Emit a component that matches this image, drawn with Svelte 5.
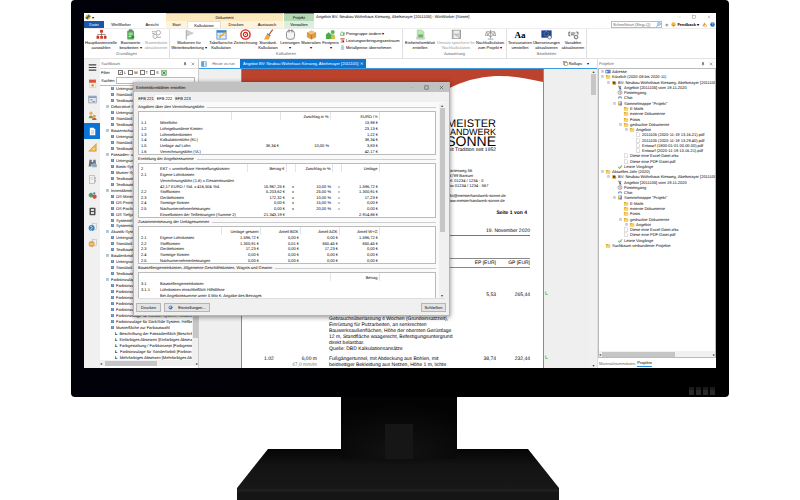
<script>
  const icons = {
    org: '<path d="M6 4v2M2 8V6h8v2M6 6v2" stroke="#555" fill="none" stroke-width=".7"/><rect x="4.4" y="1" width="3.2" height="3" fill="#d03a2b"/><path d="M.6 7.6h2.9v3H.6zM4.6 7.6h2.9v3H4.6zM8.6 7.6h2.9v3H8.6z" fill="#c9382a"/>',
    clipboard: '<rect x="2.4" y="1.6" width="7.4" height="9.8" rx="1" fill="#4fae54"/><rect x="4.2" y=".4" width="3.8" height="2.2" fill="#777"/><path d="M4 4.6h4.4M4 6.4h4.4M4 8.2h3" stroke="#e8ffe8" stroke-width=".8"/><circle cx="8.6" cy="8.8" r="1.6" fill="#2c8c3a"/>',
    refresh: '<g fill="none" stroke="#aaa"><path d="M1 3h5M1 5h3M6 9h5"/><circle cx="8" cy="4" r="2.4"/><circle cx="4.4" cy="8" r="2.2"/></g>',
    flag: '<path d="M2.5 1v10.5" stroke="#999"/><path d="M3 1.5l7 3-7 3z" fill="#d4d4d4" stroke="#aaa" stroke-width=".6"/>',
    table: '<rect x="1" y="1.5" width="10" height="9.5" fill="#e4f1fb" stroke="#3a7fc0" stroke-width=".8"/><path d="M1 2h10v2H1z" fill="#3a86cc"/><path d="M1 7h10M4.5 4v7" stroke="#86b2da" stroke-width=".6"/><path d="M3.5 9.5l6.6-6" stroke="#eda022" stroke-width="1.4"/>',
    target: '<circle cx="6" cy="6" r="5" fill="#fff" stroke="#d02a20" stroke-width="1.5"/><circle cx="6" cy="6" r="2.3" fill="#fff" stroke="#d02a20" stroke-width="1.3"/><circle cx="6" cy="6" r=".6" fill="#d02a20"/>',
    brush: '<path d="M10.6.6L6.6 6" stroke="#bb4b2a" stroke-width="1.3"/><path d="M4.6 5l3.4 2.4-1.6 4H1z" fill="#f5aa35"/><path d="M4.6 5l3.4 2.4" stroke="#4a7eb2" stroke-width="1.2"/>',
    mouse: '<rect x="1.6" y="1.8" width="8.8" height="9.4" rx="3" fill="#f5f5f5" stroke="#777" stroke-width=".9"/><path d="M4.4 .4v3.4M7.6 .4v3.4" stroke="#666" stroke-width=".9"/>',
    box: '<path d="M1 4l5-2.4L11 4v5l-5 2.4L1 9z" fill="#e29a44"/><path d="M1 4l5 2.2L11 4M6 6.2v5" stroke="#a8642a" fill="none" stroke-width=".7"/><path d="M6 1.6L11 4 6 6.2 1 4z" fill="#f2c07c"/>',
    price: '<path d="M1 11V6l3-2.4L7 6v5z" fill="#4ea84c"/><circle cx="8.4" cy="3.4" r="2.2" fill="#61b755"/><path d="M6.5 6h4v5h-4z" fill="#8cc876"/><circle cx="9.4" cy="9.4" r="1.9" fill="#f1b933"/>',
    house: '<path d="M1.5 11V5L5 1.5 8.5 5v6z" fill="#e5f5e4" stroke="#369c3c" stroke-width="1.3"/><path d="M8 3h3v8H8" fill="#58b35a"/>',
    period: '<path d="M1 1h10v2.2H1z" fill="#c13226"/><path d="M3 5h7M3 7.4h5M1 10h9" stroke="#d55b32" stroke-width="1.6"/><circle cx="8" cy="8" r="2" fill="#333"/>',
    metal: '<path d="M4 .8h4v3H4zM3 5h6v2.4H3zM2.6 8.6h7V11h-7z" fill="#cfe0ee" stroke="#7a94ae" stroke-width=".7"/>',
    sheet: '<path d="M2.4 1h5l2.4 2.4V11H2.4z" fill="#bfe4b7" stroke="#8dbb86" stroke-width=".5"/><path d="M3.6 6h5v3.4h-5z" fill="#65b561"/><path d="M1 9.4h10v1.8H1z" fill="#cecece"/>',
    save: '<rect x="1.4" y="1.4" width="9" height="9" fill="#c6c6c6" stroke="#999"/><path d="M3 2h6v3H3zM3 7h6v3H3z" fill="#eee"/><path d="M5 6l6 5" stroke="#aaa"/>',
    scale: '<g fill="none" stroke="#8a8a8a" stroke-width=".8"><path d="M6 1v9.5M3 11h6M1.6 3h8.8M1.6 3L.4 7h3zM10.4 3L9 7h3z"/><circle cx="6" cy="6" r="2.2"/></g>',
    euflag: '<rect x=".4" y="1.5" width="11.2" height="8" fill="#1e479a"/><circle cx="5.8" cy="5.3" r="2.4" fill="none" stroke="#f5d442" stroke-width=".8" stroke-dasharray=".7 1"/><circle cx="9.4" cy="9" r="2" fill="#eee" stroke="#555" stroke-width=".7"/>',
    vars: '<path d="M2.4 3.4H1v4h1.4M9 3.4h1.8v2.8M3 4.4h5M3 6.4h4" fill="none" stroke="#555" stroke-width="1"/><circle cx="8.8" cy="8.8" r="2" fill="#eee" stroke="#555" stroke-width=".9"/>',
    menu: '<path d="M1 2.5h10M1 6h10M1 9.5h10" stroke="#444" stroke-width="1.5"/>',
    calendar: '<rect x="1.5" y="1" width="9" height="10" fill="#f7f1e9" stroke="#bbb" stroke-width=".5"/><path d="M1.5 1h9v4h-9z" fill="#dd5037"/><path d="M4.6 7h3v3h-3z" fill="#d98734"/>',
    plan: '<rect x="1" y="1.5" width="10" height="9" fill="#dde9f3" stroke="#89a"/><path d="M1 2h10v1.8H1z" fill="#7095b8"/><path d="M3 6.4h3M6 8.6h3" stroke="#d05f2c" stroke-width="1.2"/>',
    people: '<circle cx="4" cy="3" r="2.2" fill="#e9b064"/><path d="M1 9.5C1 5 7 5 7 9.5z" fill="#6ba53e"/><circle cx="8.4" cy="7" r="1.9" fill="#dfa255"/><path d="M5.4 12c0-4 6-4 6 0z" fill="#c15f3b"/>',
    page: '<path d="M2.4 1h5l2.3 2.3V11H2.4z" fill="#fff"/><path d="M4 5h4M4 7h4M4 9h4" stroke="#72a6d6" stroke-width=".7"/>',
    ruler: '<path d="M11 .8V11H.8z" fill="#f0b34c" stroke="#c18328" stroke-width=".6"/><path d="M8.6 6v3H5.8z" fill="#fff4dc"/>',
    binoc: '<path d="M2 1h3v3h2V1h3l1.2 9H7.4V7H4.6v3H.8z" fill="#67737f"/><path d="M5.5 7l3-2 3 2v4h-6z" fill="#8baac3"/>',
    book: '<rect x="2" y="1" width="7" height="10" fill="#f3f3f3" stroke="#9a9a9a" stroke-width=".7"/><path d="M9.8 3v2.4M9.8 6.5v3" stroke="#69a2d2"/><path d="M3.4 3.5h4M3.4 5.5h4" stroke="#bcbcbc" stroke-width=".7"/>',
    cubes: '<path d="M1 4l3-2 3 2v3L4 9 1 7z" fill="#4fa05c"/><path d="M6 6l2.8-1.6L11.4 6v3l-2.6 1.8L6 9z" fill="#d2503b"/><circle cx="8.4" cy="3" r="1.5" fill="#4d81b9"/>',
    film: '<rect x="2" y="1" width="8" height="10" rx="1" fill="#4e4e4e"/><path d="M4 2.6h4v2.6H4zM4 6.8h4v2.6H4z" fill="#e0e0e0"/>',
    globe: '<rect x="6" y="1" width="5" height="8" fill="#eee" stroke="#aaa" stroke-width=".6"/><circle cx="4.8" cy="6.8" r="4" fill="#3d83bf"/><path d="M3 4.4c3 0 3 2 1.6 3.2S3 9.4 5 10" stroke="#cfe8f7" fill="none"/>',
    parcel: '<rect x="6" y="1" width="5" height="8" fill="#eee" stroke="#aaa" stroke-width=".6"/><circle cx="4.8" cy="6.8" r="4" fill="#e9a145"/><path d="M2.6 6.8h4.6" stroke="#fbe4bf" stroke-width="1.2"/>',
    folder: '<path d="M1 2.4h4l1 1.4h5V11H1z" fill="#e0a92f"/><path d="M2.4 5.4H12L10.6 11H1z" fill="#fbd568"/>',
    card: '<rect y="2" width="12" height="8.4" fill="#3c6aa5"/><path d="M1.4 4h3.6v4.4H1.4z" fill="#fff"/><path d="M6.4 4.6h4M6.4 7h4" stroke="#d6e4f4"/>',
    site: '<path d="M1 2.4h4l1 1.4h5V11H1z" fill="#f2bf41"/><path d="M4 4h5v6H4z" fill="#2f2f2f"/><circle cx="9" cy="9" r="2.4" fill="#de8b24"/>',
    offer: '<path d="M2 1l8 3.4-3.4 1.4L10 11H5z" fill="#2d5f9c"/><circle cx="4" cy="4" r="2" fill="#e2a64a"/>',
    mail: '<circle cx="6" cy="6" r="5" fill="#e7e7ef" stroke="#6d5a6d"/><path d="M6 3v3.4l2.4 1.4" stroke="#c04432" fill="none" stroke-width="1.3"/>',
    chat: '<path d="M1 8.6C1 1 11 1 11 8.6z" fill="#4b8bcc"/><path d="M3.4 6h5.2v4.6H3.4z" fill="#eef5fd"/>',
    binder: '<path d="M1.6 1h5v10h-5z" fill="#e69c37"/><path d="M6 1h4.8v10H6z" fill="#6a90bd"/><path d="M3 3h5v2.6H3z" fill="#fff"/>',
    file: '<path d="M2.4 1h5l2.4 2.4V11H2.4z" fill="#fff" stroke="#a0a0a0" stroke-width=".9"/>',
    recent: '<path d="M1 5h10v6H1z" fill="#dcefd9"/><path d="M2 8l3 2.6L10.6 3" fill="none" stroke="#3e9a44" stroke-width="2"/>',
    pin: '<path d="M4 1h4v5H4zM2.6 6h6.8v1.2H2.6zM5.5 7h1v4h-1z" fill="#444"/>',
    close: '<path d="M2 2l8 8M10 2l-8 8" stroke="#444" stroke-width="1.3"/>',
    min: '<path d="M1 6h10" stroke="#777"/>',
    max: '<rect x="2" y="2" width="8" height="8" fill="none" stroke="#555" stroke-width="1.5"/>',
    search: '<circle cx="7.4" cy="4.6" r="3.4" fill="#cde6f8" stroke="#3c8bcc" stroke-width="1.4"/><path d="M5 7.2L1 11" stroke="#3c8bcc" stroke-width="1.8"/>',
    excel: '<rect x="1" y="1" width="10" height="10" fill="#b9e0b4" stroke="#4f9a50"/><path d="M3 3l6 6M9 3L3 9" stroke="#2f7f36" stroke-width="1.6"/>',
    app: '<circle cx="6" cy="6" r="5" fill="#f2b53b"/><path d="M1 6a5 5 0 005 5V6z" fill="#2f6fb4"/><path d="M6 1a5 5 0 015 5H6z" fill="#4c8f3d"/><circle cx="6" cy="6" r="1.6" fill="#333"/>',
    smile: '<circle cx="6" cy="6" r="5.2" fill="#f7b52c"/><path d="M3 7c1.6 2.6 4.4 2.6 6 0" stroke="#845400" fill="none"/>',
    alert: '<path d="M6 .8L11.6 10H.4z" fill="#f5a623"/><circle cx="8.4" cy="8.4" r="2.4" fill="#fff" stroke="#d98613"/>',
    help: '<circle cx="6" cy="6" r="5.4" fill="#1d5fae"/><path d="M4 4.6c0-2.6 4-2.6 4 0 0 1.6-2 1.4-2 3M6 8.6v1.2" stroke="#fff" fill="none" stroke-width="1.3"/>',
    side: '<rect x="1" y="1.5" width="10" height="9" fill="#fff" stroke="#3981bd"/><path d="M1 1.5h5v9H1z" fill="#5aa0d8"/><path d="M7.5 4h2.5M7.5 6h2.5M7.5 8h2.5" stroke="#567"/>',
    roll: '<rect x="1" y="1" width="7" height="7" fill="#eee" stroke="#555"/><rect x="4" y="4" width="7" height="7" fill="#fff" stroke="#555"/>',
    gear: '<circle cx="6" cy="6" r="4.8" fill="#4d86c4"/><circle cx="5" cy="5" r="2" fill="#cfe2f6"/><path d="M6 9.5L10.5 5" stroke="#234f86" stroke-width="1.3"/>'
  };

  const groups = [
    { label: 'Grundlagen', w: 86, items: [
      ['org', 34, 'Hauptkostenstelle', 'auswählen'],
      ['clipboard', 25, 'Basiswerte', 'bearbeiten ▾'],
      ['refresh', 26, 'Stammdaten', 'aktualisieren', true]] },
    { label: 'Kalkulieren', w: 233, items: [
      ['flag', 38, 'Markieren für', 'Weiterbearbeitung ▾'],
      ['table', 26, 'Tabellarische', 'Kalkulation'],
      ['target', 23, 'Zeitrechnung', ''],
      ['brush', 22, 'Standard-', 'Kalkulation'],
      ['mouse', 22, 'Leistungen', '▾'],
      ['box', 20, 'Materialien', '▾'],
      ['price', 19, 'Festpreis', '▾']],
      list: [['house', 'Preisgruppe ändern ▾'], ['period', 'Leistungserbringungszeitraum'], ['metal', 'Metallpreise übernehmen']] },
    { label: 'Auswertung', w: 104, items: [
      ['sheet', 34, 'Einheitsformblatt', 'erstellen'],
      ['save', 38, 'Umsatz speichern für', 'Nachkalkulation', true],
      ['scale', 30, 'Nachkalkulation', 'zum Projekt ▾']] },
    { label: 'Bearbeiten', w: 80, items: [
      ['Aa', 26, 'Textvarianten', 'umstellen'],
      ['euflag', 27, 'Übersetzungen', 'aktualisieren'],
      ['vars', 26, 'Variablen', 'aktualisieren']] }
  ];

  const nav = ['menu', 'calendar', 'plan', 'people', 'page', 'ruler', 'binoc', 'book', 'cubes', 'film', 'globe', 'parcel'];

  const basics = ['Untergrund', 'Standard', 'Textbaustein'];
  const tree = [
    ...basics.map((t) => [1, t]),
    [0, 'Dekorative S'], ...basics.map((t) => [1, t]),
    [0, 'Bautenschutz'], ...basics.map((t) => [1, t]),
    [0, 'Fassaden- u'], [1, 'Untergrund'], [1, 'Basis-Syst'], [1, 'Muster-Syst'], [1, 'Textbaustein'], [1, 'Textbaustein'],
    [0, 'Innendämm'], [1, 'OS-Mineral'], [1, 'OS-Protect'], [1, 'OS-Fachu'], [1, 'OS Tiefgar'], [1, 'Systemel'], [1, 'Systemtür'],
    [0, 'Akustik-Syst'], ...basics.map((t) => [1, t]),
    [0, 'Baudenkmal'], ...basics.map((t) => [1, t]),
    [0, 'Farbtonzulage'],
    ...Array(5).fill([1, 'Farbtonzulage']),
    [1, 'Farbtonzulage für Carbon System, Hellbezu'],
    [1, 'Farbtonzulage für DarkSide System, Hellbez'],
    [1, 'Musterfläche zur Farbauswahl'],
    [2, 'Beschriftung der Fassadenfläch [Beschrif'],
    [2, 'Einfarbiges Absetzen [Einfarbiges Absetz'],
    [2, 'Farbgestaltung / Farbkonzept [Farbgesta'],
    [2, 'Farbtonzulage für Sonderfarbtö [Farbton'],
    [2, 'Mehrfarbiges Absetzen [Mehrfarbiges Ab']
  ];

  const bv = 'BV: Neubau Wohnhaus Kiesweg, Abelsmayer [2011105] vor';
  const head = [
    [1, 'site', bv, '−'], [2, 'offer', 'Angebot [2011105] vom 19.11.2020'], [2, 'mail', 'Posteingang'], [2, 'chat', 'Chat'],
    [2, 'binder', 'Sammelmappe "Projekt"', '−'], [3, 'folder', 'E-Mails'], [3, 'folder', 'externe Dokumente'], [3, 'folder', 'Fotos'],
    [3, 'folder', 'gedruckte Dokumente', '−']
  ];
  const tail = [[3, 'file', 'Diese eine Excel-Datei.xlsx'], [3, 'file', 'Diese eine PDF-Datei.pdf'], [2, 'recent', 'Letzte Vorgänge']];
  const projects = [
    [0, 'card', 'Adresse', '+'],
    [0, 'folder', 'Kürzlich (2020-08 bis 2020-11)', '−'], ...head,
    [4, 'folder', 'Angebot', '−'],
    [5, 'file', '2011105 (2020-11-19 13.16.21).pdf'], [5, 'file', '2011105 (2020-11-19 13.29.40).pdf'],
    [5, 'file', 'Entwurf (1800-01-01 00.00.00).pdf'], [5, 'file', 'Entwurf (2020-11-19 13.16.21).pdf'],
    ...tail,
    [0, 'folder', 'Aktuelles Jahr (2020)', '−'], ...head, [4, 'folder', 'Angebot', '+'], ...tail,
    [0, 'folder', 'Suchbaum verbundener Projekte']
  ];

  const sections = [
    { title: 'Angaben über den Verrechnungslohn', h: 44, cols: [19, 73, 49, 50, 49],
      head: ['', '', '', 'Zuschlag in %', 'EURO / h'],
      rows: [
        ['1.1', 'Mittellohn', '', '', '13,98 €'], ['1.2', 'Lohngebundene Kosten', '', '', '23,13 €'],
        ['1.3', 'Lohnnebenkosten', '', '', '1,22 €'], ['1.4', 'Kalkulationslohn (KL)', '', '', '38,34 €'],
        ['1.5', 'Umlage auf Lohn', '38,34 €', '10,00 %', '3,83 €'], ['1.6', 'Verrechnungslohn (VL)', '', '', '42,17 €']] },
    { title: 'Ermittlung der Angebotssumme', h: 55, cols: [19, 89, 39, 9, 37, 9, 38],
      head: ['2', 'EKT = unmittelbare Herstellungskosten', 'Betrag €', '', 'Zuschlag in %', '', 'Umlage'],
      rows: [
        ['2.1', 'Eigene Lohnkosten'], ['', 'Verrechnungslohn (1.6) x Gesamtstunden'],
        ['', '42,17 EURO / Std. x 416,504 Std.', '15.967,25 €', 'x', '10,00 %', '=', '1.596,72 €'],
        ['2.2', 'Stoffkosten', '5.203,62 €', 'x', '25,00 %', '=', '1.300,91 €'],
        ['2.3', 'Gerätekosten', '172,32 €', 'x', '10,00 %', '=', '17,23 €'],
        ['2.4', 'Sonstige Kosten', '0,00 €', 'x', '15,00 %', '=', '0,00 €'],
        ['2.5', 'Nachunternehmerleistungen', '0,00 €', 'x', '20,00 %', '=', '0,00 €'],
        ['', 'Einzelkosten der Teilleistungen (Summe 2)', '21.343,19 €', '', '', '', '2.914,86 €']] },
    { title: 'Zusammensetzung der Umlagesummen', h: 38, cols: [19, 63, 39, 40, 39, 40],
      head: ['', '', 'Umlage gesamt', 'Anteil BGK', 'Anteil AGK', 'Anteil W+G'],
      rows: [
        ['2.1', 'Eigene Lohnkosten', '1.596,72 €', '0,00 €', '0,00 €', '1.596,72 €'],
        ['2.2', 'Stoffkosten', '1.300,91 €', '0,01 €', '650,45 €', '650,45 €'],
        ['2.3', 'Gerätekosten', '17,23 €', '0,00 €', '17,23 €', '0,00 €'],
        ['2.4', 'Sonstige Kosten', '0,00 €', '0,00 €', '0,00 €', '0,00 €'],
        ['2.5', 'Nachunternehmerleistungen', '0,00 €', '0,00 €', '0,00 €', '0,00 €']] },
    { title: 'Baustellengemeinkosten, Allgemeine Geschäftskosten, Wagnis und Gewinn', h: 26, cols: [19, 172, 49],
      head: ['', '', 'Betrag'],
      rows: [['3.1', 'Baustellengemeinkosten'], ['3.1.1', 'Lohnkosten einschließlich Hilfslöhne'], ['', 'Bei Angebotssumme unter 5 Mio €: Angabe des Betrages']] }
  ];
</script>

{#snippet icon(name)}
  <svg class="ico" viewBox="0 0 12 12" aria-hidden="true">{@html icons[name]}</svg>
{/snippet}

<div class="stage">
  <div class="monitor">
    <div class="screen">
      <header class="top">
        <div class="tabs-left">
          <div class="quick">{@render icon('app')}<span>▾</span></div>
          <div class="tabs"><button class="datei">Datei</button><button class="w34">WinWorker</button><button class="w28">Ansicht</button></div>
        </div>
        <div class="context doku">
          <div class="cap">Dokument</div>
          <div class="tabs"><button class="w21">Start</button><button class="active">Kalkulation</button><button class="w30">Drucken</button><button class="w32">Austausch</button></div>
        </div>
        <div class="context proj">
          <div class="cap">Projekt</div>
          <div class="tabs"><button class="grow">Verwalten</button></div>
        </div>
        <div class="titlebar">
          <div class="title-row">
            <span>Angebot BV: Neubau Wohnhaus Kiesweg, Abelsmayer [2011105] - WinWorker [Sonne]</span>
            <span class="winctl">
              <button aria-label="Minimieren">{@render icon('min')}</button>
              <button aria-label="Maximieren">{@render icon('max')}</button>
              <button aria-label="Schließen">{@render icon('close')}</button>
            </span>
          </div>
          <div class="tool-row">
            <label class="search"><input aria-label="Schnellstart" placeholder="Schnellstart (Strg+Q)" />{@render icon('search')}</label>
            <span class="eye">◉</span>
            <button class="feedback">{@render icon('smile')}<b>Feedback ▾</b></button>
            <button aria-label="Hinweise">{@render icon('alert')}</button>
            <button aria-label="Hilfe">{@render icon('help')}</button>
          </div>
        </div>
      </header>

      <div class="ribbon">
        {#each groups as g}
          <section class="group" style:width="{g.w}px">
            <div class="cmds">
              {#each g.items as [name, w, a, b, off]}
                <button class="cmd" class:off style:width="{w}px">
                  {#if name === 'Aa'}<span class="aa">Aa</span>{:else}{@render icon(name)}{/if}
                  <span>{a}</span><span>{b}</span>
                </button>
              {/each}
              {#if g.list}
                <div class="cmdlist">
                  {#each g.list as [name, t]}<button>{@render icon(name)}{t}</button>{/each}
                </div>
              {/if}
            </div>
            <div class="glabel">{g.label}</div>
          </section>
        {/each}
      </div>

      <div class="work">
        <nav class="rail">
          {#each nav as n}
            <button class:on={n === 'page'} aria-label={n}>{@render icon(n)}</button>
          {/each}
        </nav>

        <aside class="finder">
          <div class="phead"><span>Suchbaum</span>{@render icon('pin')}{@render icon('close')}</div>
          <div class="filter">
            <span class="flabel">Filter</span>
            <label><input type="checkbox" checked />L</label>
            <label><input type="checkbox" />M</label>
            <label><input type="checkbox" />T</label>
            <label><input type="checkbox" />S</label>
            {@render icon('excel')}
          </div>
          <label class="suchen"><span class="flabel">Suchen</span><input /></label>
          <div class="treebox">
            <ul class="tree">
              {#each tree as [lvl, t]}
                <li class="l{lvl}">{#if lvl === 2}<b>L</b>{:else}<i>{lvl ? '+' : '−'}</i>{/if}<span>{t}</span></li>
              {/each}
            </ul>
            <div class="vbar tree-v"><i></i></div>
          </div>
          <div class="hbar"><span>◂</span><i></i><span>▸</span></div>
        </aside>

        <main class="center">
          <div class="doctabs">
            {@render icon('side')}
            <button class="dt">Heute zu tun</button>
            <button class="dt cur">Angebot BV: Neubau Wohnhaus Kiesweg, Abelsmayer [2011105] <span>✕</span></button>
            <button class="rollups">{@render icon('roll')}Rollups</button><span class="arr">▾</span>
          </div>
          <div class="canvas">
            <article class="paper">
              <svg class="swoosh" viewBox="0 0 302 20" preserveAspectRatio="none" aria-hidden="true"><path d="M0 0H302V13Q272 6 254 7Q230 8 206 20H0z" fill="#bb422c"/></svg>
              <div class="brand">
                <div class="b1">MEISTER</div><div class="b2">HANDWERK</div><div class="b3">SONNE</div>
                <div class="b4">mit Tradition seit 1952</div>
              </div>
              <address>Marienweg 56<br />26789 Bantum<br />Tel. 01234 / 1234 - 0<br />Fax 01234 / 1234 - 567<br /><br />info@meisterhandwerk-sonne.de<br />www.meisterhandwerk-sonne.de</address>
              <div class="pageno">Seite 1 von 4</div>
              <div class="date">19. November 2020</div>
              <table class="items">
                <thead><tr><th class="pos">Pos.</th><th class="qty">Menge</th><th class="desc">Bezeichnung</th><th class="ep">EP [EUR]</th><th class="gp">GP [EUR]</th></tr></thead>
                <tbody>
                  <tr><td>1.01</td><td class="num">48,00 m²<br /><br /><br />0,00 h</td>
                    <td class="desc">Arbeits- und Schutzgerüst als Fassadengerüst<br />aus vorgefertigten Bauteilen, Lastklasse 3, W06<br />einschließlich Auf- und Abbau, Vorhaltung<br />DIN 4420-1, Flächengerüst als Stahlrohrgerüst,<br />Gebrauchsüberlassung 4 Wochen (Grundeinsatzzeit),<br />Einrüstung für Putzarbeiten, an senkrechten<br />Bauwerksaußenflächen, Höhe der obersten Gerüstlage<br />12 m, Standfläche waagerecht, Befestigungsuntergrund<br />direkt belastbar.<br />Quelle: DBD Kalkulationsansätze</td>
                    <td class="num">5,53</td><td class="num">265,44</td></tr>
                  <tr><td>1.02</td><td class="num">6,00 m<br /><small>47,0 mm/m</small></td>
                    <td class="desc">Fußgängertunnel, mit Abdeckung aus Bohlen, mit<br />beidseitiger Bekleidung aus Netzen, Höhe 1 m, lichte</td>
                    <td class="num">38,74</td><td class="num">232,44</td></tr>
                </tbody>
              </table>
            </article>
            <div class="marks"><span>L</span><span>L</span></div>
            <div class="vbar doc-v"><span>▴</span><i></i><span class="end">▾</span></div>
          </div>
        </main>

        <aside class="projects">
          <div class="phead"><span>Projekte</span>{@render icon('pin')}{@render icon('close')}</div>
          <div class="pbox">
            <ul class="ptree">
              {#each projects as [lvl, ic, t, ex]}
                <li style:padding-left="{2 + lvl * 6}px"><i class:show={ex}>{ex ?? ''}</i>{@render icon(ic)}<span>{t}</span></li>
              {/each}
            </ul>
            <div class="hbar wide"><span>◂</span><i></i><span>▸</span></div>
          </div>
          <div class="ptabs"><button>Materialstammdaten</button><button class="cur">Projekte</button></div>
        </aside>
      </div>

      <div class="dialog" role="dialog" aria-label="Einheitsformblätter erstellen">
        <div class="dtitle"><span>Einheitsformblätter erstellen</span>
          <button aria-label="Minimieren" class="dim">{@render icon('min')}</button>
          <button aria-label="Maximieren">{@render icon('max')}</button>
          <button aria-label="Schließen">{@render icon('close')}</button>
        </div>
        <div class="efb"><button>EFB 221</button><button class="cur">EFB 222</button><button>EFB 223</button></div>
        <div class="pane">
          <div class="forms">
            {#each sections as s, n}
              <h4>{s.title}</h4>
              <div class="tbox" class:open={n === 3} style:height="{s.h}px">
                <table>
                  <colgroup>{#each s.cols as c}<col style:width="{c}px" />{/each}<col /></colgroup>
                  <thead><tr>{#each s.head as h, i}<th class:txt={i < 2}>{h}</th>{/each}<th class="rest"></th></tr></thead>
                  <tbody>
                    {#each s.rows as r}
                      <tr>{#each s.cols as _, i}<td class:txt={i < 2}>{r[i] ?? ''}</td>{/each}<td></td></tr>
                    {/each}
                  </tbody>
                </table>
              </div>
            {/each}
          </div>
          <div class="vbar dlg-v"><span>▴</span><i></i><span class="end">▾</span></div>
        </div>
        <div class="dfoot">
          <button class="w24">Drucken</button>
          <button class="w46">{@render icon('gear')}<span>Einstellungen...</span></button>
          <button class="w24 last">Schließen</button>
        </div>
      </div>
    </div>
    <div class="leds"><i></i><i></i><i></i><i></i></div>
  </div>
  <svg class="stand" viewBox="0 0 326 103" aria-hidden="true">
    <defs>
      <linearGradient id="base" x1="0" y1="0" x2="0" y2="1"><stop offset="0" stop-color="#050505" /><stop offset=".35" stop-color="#141414" /><stop offset="1" stop-color="#191919" /></linearGradient>
      <radialGradient id="neck" cx=".5" cy=".9" r=".8"><stop offset="0" stop-color="#131313" /><stop offset="1" stop-color="#030303" /></radialGradient>
    </defs>
    <path d="M31 52H291L322 91V103H0V91z" fill="url(#base)" />
    <path d="M0 92h322v3H0z" fill="#1e1e1e" />
    <path d="M0 95h322v8H0z" fill="#151515" />
    <path d="M104 0h116v62H104z" fill="url(#neck)" />
    <path d="M148 27h28v35h-28z" fill="#161616" />
  </svg>
</div>

<style>
  :global(body) { background: #fff; }
  .stage { height: 100vh; min-height: 500px; display: flex; flex-direction: column; align-items: center; overflow: hidden; font: 4px/5px "Liberation Sans", Arial, sans-serif; color: #000; text-rendering: geometricPrecision; }
  .stage * { box-sizing: border-box; }
  button, input { font: inherit; color: inherit; border: 0; padding: 0; margin: 0; background: none; border-radius: 0; min-width: 0; white-space: nowrap; }
  ul { list-style: none; margin: 0; padding: 0; }
  i { font-style: normal; }
  .ico { width: 7px; height: 7px; display: block; flex: none; }

  .monitor { flex: 1; min-height: 0; width: 82.25%; padding: 13px 13px 0; background: linear-gradient(90deg, #01010a, #000 60%); border-radius: 4px; display: flex; flex-direction: column; }
  .screen { flex: 1; min-height: 0; background: #fff; display: flex; flex-direction: column; position: relative; overflow: hidden; }
  .leds { height: 29px; flex: none; display: flex; justify-content: flex-end; align-items: flex-end; gap: 2px; padding: 0 1px 2px 0; }
  .leds i { width: 5px; height: 8px; background: #292929; border-top: 3px solid #1a1a1a; }
  .stand { width: 326px; height: 103px; flex: none; }

  .top { display: flex; height: 15px; flex: none; }
  .tabs-left { width: 82px; flex: none; }
  .quick { height: 8px; display: flex; align-items: center; padding-left: 1px; gap: 1px; }
  .quick .ico { width: 6px; height: 6px; }
  .tabs { display: flex; height: 7px; }
  .tabs button { text-align: center; }
  .tabs .datei { width: 20px; background: #1858a8; color: #fff; }
  .w34 { width: 34px; } .w28 { width: 28px; } .w21 { width: 21px; } .w30 { width: 30px; } .w32 { width: 32px; }
  .grow { flex: 1; }
  .active { width: 34px; background: #fff; border: 1px solid #eadfc9; border-bottom: 0; }
  .context { text-align: center; flex: none; }
  .cap { height: 8px; line-height: 7px; }
  .doku { width: 117px; background: #fff3dc; }
  .doku .cap { background: #fde7bd; border-top: 1px solid #f5b652; }
  .proj { width: 31px; background: #dcefdc; border-left: 1px solid #fff; }
  .proj .cap { background: #b4dab5; border-top: 1px solid #47a14d; }
  .titlebar { flex: 1; min-width: 0; }
  .title-row { height: 7px; display: flex; align-items: center; justify-content: space-between; padding-left: 2px; white-space: nowrap; }
  .winctl { display: flex; gap: 11px; padding-right: 5px; opacity: .6; }
  .winctl .ico { width: 4px; height: 4px; }
  .tool-row { height: 8px; display: flex; justify-content: flex-end; align-items: center; gap: 3px; padding-right: 1px; }
  .tool-row .ico { width: 5px; height: 5px; }
  .search { width: 51px; height: 7px; border: 1px solid #bbb; display: flex; align-items: center; }
  .search input { flex: 1; height: 5px; padding-left: 1px; outline: 0; }
  .search input::placeholder { color: #666; opacity: 1; }
  .eye { color: #999; }
  .feedback { display: flex; align-items: center; gap: 1px; }

  .ribbon { display: flex; height: 31px; flex: none; border-bottom: 1px solid #e2e2e2; border-top: 1px solid #ececec; }
  .group { border-right: 1px solid #e0e0e0; flex: none; display: flex; flex-direction: column; }
  .cmds { display: flex; flex: 1; }
  .cmd { flex: none; display: flex; flex-direction: column; align-items: center; }
  .cmd .ico { width: 11px; height: 11px; }
  .cmd span { height: 5px; }
  .cmd.off { color: #999; }
  .cmd .aa { height: 11px; font: bold 9px/12px "Liberation Serif", serif; }
  .cmdlist { display: flex; flex-direction: column; padding-top: 1px; }
  .cmdlist button { display: flex; align-items: center; height: 7px; gap: 1px; }
  .cmdlist .ico { width: 5px; height: 5px; }
  .glabel { height: 7px; color: #666; text-align: center; }

  .work { flex: 1; min-height: 0; display: flex; }
  .rail { width: 16px; flex: none; background: #f0f0f0; display: flex; flex-direction: column; }
  .rail button { height: 16px; display: grid; place-items: center; }
  .rail .ico { width: 9px; height: 9px; }
  .rail .on { background: #0a74d4; }

  .phead { height: 9px; flex: none; display: flex; align-items: center; gap: 4px; padding: 0 3px 0 1px; color: #666; }
  .phead span { flex: 1; }
  .phead .ico { width: 4px; height: 4px; }

  .finder { width: 99px; flex: none; border-right: 1px solid #ccc; display: flex; flex-direction: column; background: #fff; }
  .filter { display: flex; align-items: center; height: 8px; gap: 2px; padding-left: 1px; border-top: 1px solid #ddd; }
  .filter label { display: flex; align-items: center; gap: 1px; }
  .filter .ico { width: 6px; height: 6px; }
  .flabel { width: 15px; }
  .filter input { appearance: none; width: 5px; height: 5px; border: 1px solid #777; background: #fff; }
  .filter input:checked::after { content: "✓"; display: block; font: bold 4px/3px "DejaVu Sans", sans-serif; color: #000; }
  .suchen { display: flex; align-items: center; height: 9px; padding-left: 1px; }
  .suchen input { flex: 1; height: 7px; border: 1px solid #bbb; margin-right: 3px; }
  .treebox { flex: 1; min-height: 0; display: flex; border-top: 1px solid #bbb; }
  .tree { flex: 1; min-width: 0; display: grid; grid-auto-rows: minmax(0, 1fr); }
  .tree li { display: flex; align-items: center; gap: 2px; min-width: 0; overflow: hidden; white-space: nowrap; }
  .tree .l0 { padding-left: 6px; } .tree .l1 { padding-left: 11px; } .tree .l2 { padding-left: 15px; }
  .tree i { width: 3px; height: 3px; flex: none; background: #5d8fc4; color: #fff; font-size: 3px; line-height: 3px; text-align: center; }
  .tree .l0 i { background: #b6cde6; color: #246; }
  .tree b { width: 3px; }

  .vbar { width: 6px; flex: none; background: #f0f0f0; display: flex; flex-direction: column; align-items: center; color: #444; }
  .vbar i { width: 5px; background: #c6c6c6; }
  .vbar span { height: 5px; }
  .vbar .end { margin-top: auto; }
  .tree-v i { height: 92%; }
  .hbar { height: 6px; flex: none; background: #f0f0f0; display: flex; align-items: center; color: #444; margin-bottom: 2px; }
  .hbar i { height: 5px; width: 52px; background: #c6c6c6; margin: 0 auto 0 3px; }

  .center { flex: 1; min-width: 0; display: flex; flex-direction: column; }
  .doctabs { height: 10px; flex: none; display: flex; align-items: center; border-bottom: 1px solid #3c9be0; padding-left: 2px; }
  .doctabs > .ico { width: 6px; height: 6px; }
  .dt { height: 9px; width: 33px; color: #666; }
  .dt.cur { width: 126px; background: #0a74d4; color: #fff; display: flex; align-items: center; justify-content: space-between; padding: 0 3px; }
  .rollups { margin-left: auto; display: flex; align-items: center; gap: 1px; }
  .rollups .ico { width: 5px; height: 5px; }
  .arr { padding: 0 8px 0 5px; }
  .canvas { flex: 1; min-height: 0; display: flex; background: #efefef; padding-left: 42px; }
  .paper { width: 303px; flex: none; background: #fff; border: solid #8b8b8b; border-width: 0 1px; overflow: hidden; font-size: 5px; line-height: 6px; }
  .swoosh { display: block; width: 100%; height: 20px; }
  .brand { padding: 31px 47px 0 0; text-align: right; }
  .b1 { font-size: 11px; line-height: 9px; }
  .b2 { font-size: 9px; line-height: 7px; }
  .b3 { font-size: 14px; line-height: 11px; }
  .b4 { font-size: 5px; line-height: 7px; }
  address { font: normal 4px/5px "Liberation Sans", Arial, sans-serif; margin: 14px 38px 7px auto; width: 58px; white-space: nowrap; }
  .pageno { text-align: right; font-weight: bold; padding-right: 16px; }
  .date { text-align: right; margin: 12px 13px 22px 22px; padding-bottom: 1px; border-bottom: 1px solid #777; }
  .items { border-collapse: collapse; width: 266px; margin-left: 22px; table-layout: fixed; }
  .items th { font-weight: normal; text-align: right; padding: 0; height: 9px; border: solid #888; border-width: 1px 0; }
  .items .pos { width: 22px; text-align: left; } .items .qty { width: 31px; }
  .items .ep { width: 40px; } .items .gp { width: 34px; }
  .items .desc { text-align: left; padding-left: 12px; white-space: nowrap; }
  .items td { vertical-align: top; padding: 4px 0 0; }
  .items td.num { text-align: right; }
  .items tbody tr:first-child td { padding-top: 24px; }
  .items small { font-size: 5px; color: #777; }
  .marks { flex: 1; color: #3fb52a; font-weight: bold; font-size: 5px; padding-top: 223px; display: flex; flex-direction: column; gap: 59px; padding-left: 1px; }
  .doc-v { width: 7px; }
  .doc-v i { height: 21px; }

  .projects { width: 119px; flex: none; display: flex; flex-direction: column; border-left: 1px solid #ddd; }
  .pbox { flex: 1; min-height: 0; border: 1px solid #bbb; display: flex; flex-direction: column; justify-content: space-between; }
  .ptree { height: 179px; display: grid; grid-auto-rows: minmax(0, 1fr); overflow: hidden; }
  .ptree li { display: flex; align-items: center; min-width: 0; white-space: nowrap; overflow: hidden; }
  .ptree .ico { width: 6px; height: 5px; margin: 0 1px; }
  .ptree i { width: 3px; height: 3px; flex: none; font-size: 3px; line-height: 3px; text-align: center; }
  .ptree .show { background: #d2dce8; color: #333; }
  .hbar.wide { margin: 0; justify-content: space-between; }
  .hbar.wide i { width: 73px; margin-left: 1px; }
  .ptabs { height: 10px; flex: none; display: flex; gap: 2px; padding: 1px 0 1px 1px; color: #666; }
  .ptabs .cur { color: #000; border-bottom: 1px solid #2f8fdc; }

  .dialog { position: absolute; left: 49px; top: 69px; width: 317px; background: #f0f0f0; box-shadow: 0 1px 5px #0007; border: 1px solid #b4b4b4; border-top: 0; }
  .dtitle { height: 10px; background: #c1c1c1; display: flex; align-items: center; gap: 10px; padding: 0 5px 0 2px; }
  .dtitle span { flex: 1; }
  .dtitle .ico { width: 5px; height: 5px; }
  .dim { opacity: .4; }
  .efb { display: flex; height: 7px; margin: 3px 3px 0; }
  .efb button { width: 18px; }
  .efb .cur { background: #fff; width: 19px; }
  .pane { display: flex; margin: 0 4px; height: 197px; padding-top: 1px; background: #fafafa; border-bottom: 1px solid #ddd; }
  .forms { flex: 1; display: flex; flex-direction: column; }
  h4 { font: inherit; margin: 0; height: 8px; line-height: 8px; display: flex; align-items: center; gap: 3px; white-space: nowrap; }
  h4::after { content: ""; flex: 1; height: 1px; background: #ccc; }
  .tbox { border: 1px solid #bbb; background: #fff; }
  .tbox.open { border-bottom: 0; }
  .tbox table { width: 100%; height: 100%; table-layout: fixed; border-collapse: collapse; }
  .tbox th, .tbox td { padding: 0 1px 0 0; font-weight: normal; text-align: right; white-space: nowrap; line-height: 5px; height: 5px; }
  .tbox th { height: 8px; border-right: 1px solid #e4e4e4; }
  .tbox th.rest, .tbox th:first-child { border: 0; }
  .tbox .txt { text-align: left; padding-left: 2px; }
  .dlg-v { margin-left: 3px; }
  .dlg-v i { height: 124px; }
  .dfoot { display: flex; gap: 3px; padding: 4px 3px 3px 2px; }
  .dfoot button { height: 9px; border: 1px solid #b5b5b5; background: #e4e4e4; display: flex; align-items: center; justify-content: center; gap: 5px; }
  .dfoot .ico { width: 5px; height: 5px; }
  .w24 { width: 25px; } .w46 { width: 46px; }
  .dfoot .last { margin-left: auto; }
</style>
